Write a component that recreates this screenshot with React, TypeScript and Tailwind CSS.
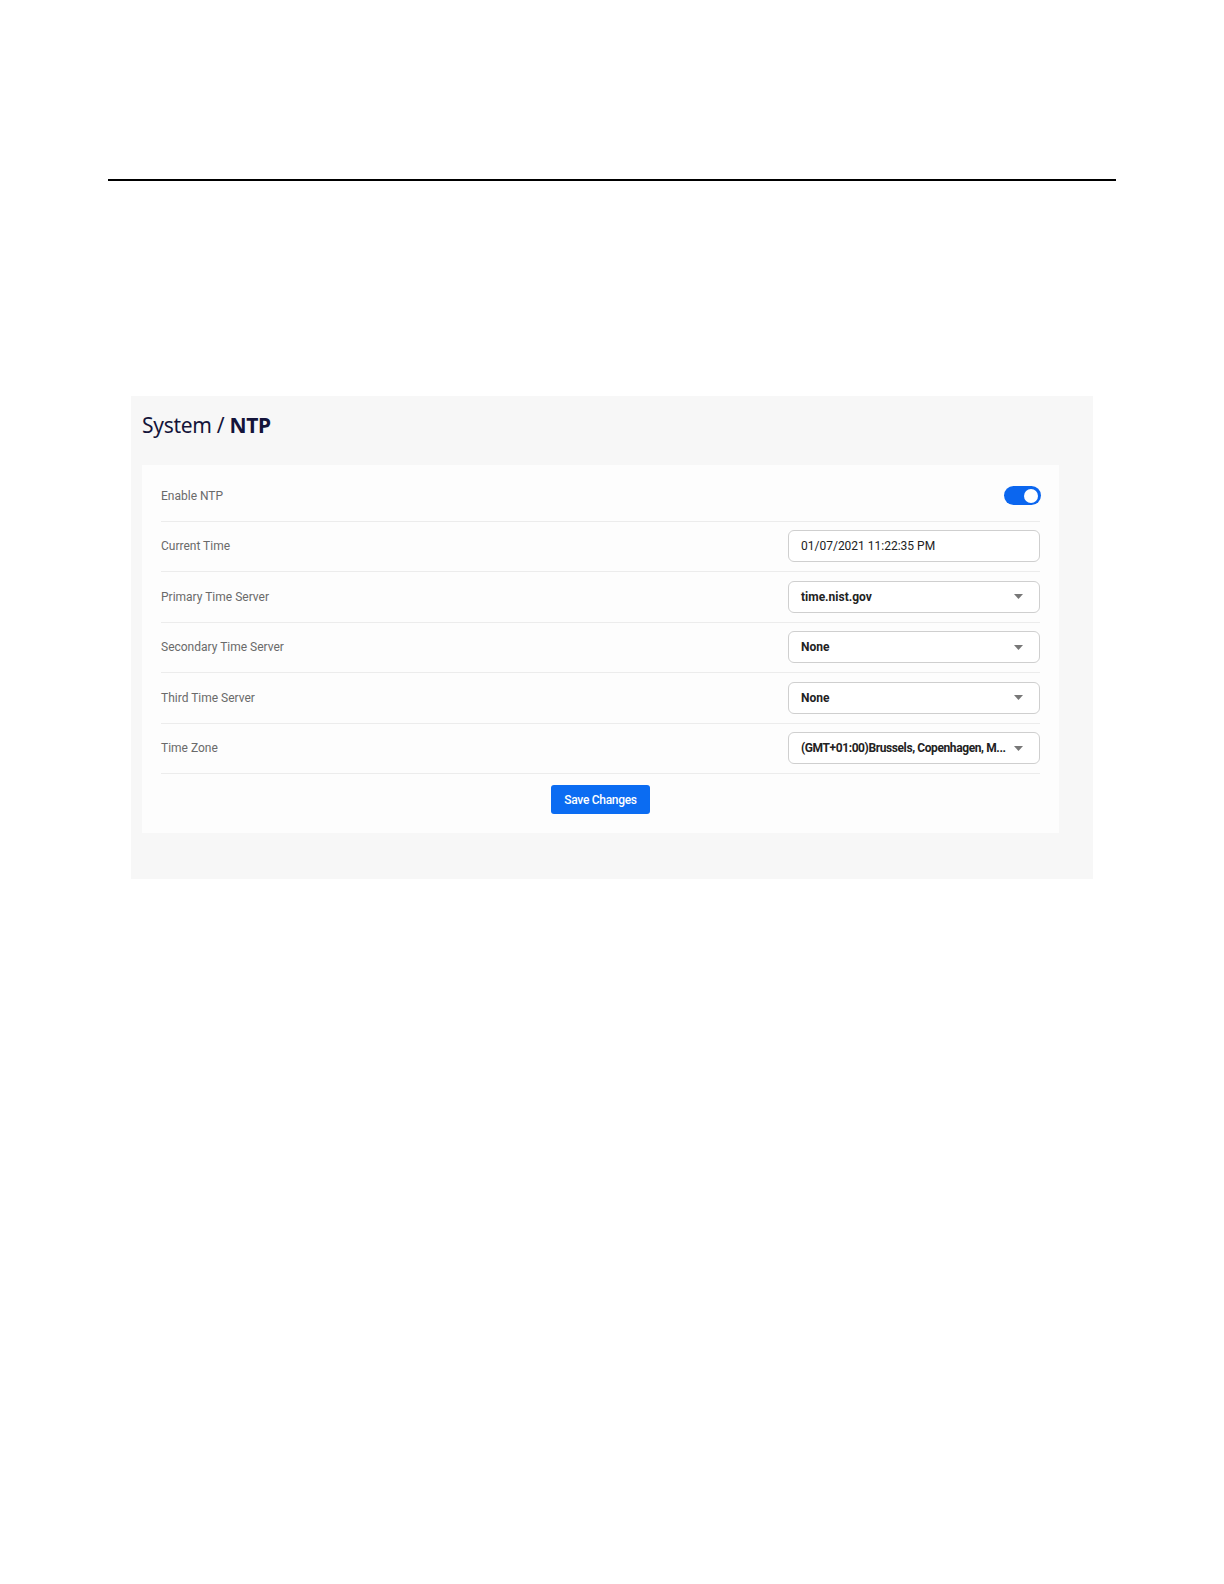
import React from "react";

const Caret = () => (
  <svg width="9" height="5" viewBox="0 0 9 5" className="shrink-0">
    <path d="M0 0 L9 0 L4.5 5 Z" fill="#777" />
  </svg>
);

function SelectBox({ value, tight }: { value: string; tight?: boolean }) {
  return (
    <div className="w-[252px] h-[32px] rounded-[6px] border border-[#cfcfcf] bg-white flex items-center pl-[12px] pr-[16px] gap-[5px]">
      <span
        className={
          tight
            ? "flex-1 whitespace-nowrap text-[12px] font-bold text-[#222] tracking-[-0.4px]"
            : "flex-1 whitespace-nowrap text-[12px] font-bold text-[#222]"
        }
      >
        {value}
      </span>
      <Caret />
    </div>
  );
}

function Row({ label, children }: { label: string; children: React.ReactNode }) {
  return (
    <div className="h-[50.5px] flex items-center justify-between border-b border-[#ececec]">
      <span className="text-[12px] text-[#6a6a6a]">{label}</span>
      {children}
    </div>
  );
}

export default function App() {
  return (
    <div className="bg-white pb-[100px]" style={{ fontFamily: "Roboto, 'Liberation Sans', sans-serif" }}>
      <div className="pt-[179px] pl-[108px]">
        <div className="h-[2px] bg-black w-[1008px]" />
      </div>
      <div className="mt-[215px] ml-[131px] w-[962px] h-[483px] bg-[#f7f7f7] pt-[15px] px-[11px]">
        <h1
          className="text-[21px] leading-[28px] text-[#14143a] tracking-[-0.3px]"
          style={{ fontFamily: "'Noto Sans', 'Open Sans', sans-serif" }}
        >
          System / <span className="font-bold">NTP</span>
        </h1>
        <div className="mt-[26px] w-[917px] h-[368px] bg-[#fdfdfd] pt-[6px] px-[19px]">
          <Row label="Enable NTP">
            <div className="w-[37px] h-[19px] rounded-full bg-[#0b66ef] flex items-center justify-end pr-[3px] mr-[-1px]">
              <div className="w-[14px] h-[14px] rounded-full bg-white" />
            </div>
          </Row>
          <Row label="Current Time">
            <div className="w-[252px] h-[32px] rounded-[6px] border border-[#cfcfcf] bg-white flex items-center pl-[12px]">
              <span className="text-[12px] text-[#222]">01/07/2021 11:22:35 PM</span>
            </div>
          </Row>
          <Row label="Primary Time Server">
            <SelectBox value="time.nist.gov" />
          </Row>
          <Row label="Secondary Time Server">
            <SelectBox value="None" />
          </Row>
          <Row label="Third Time Server">
            <SelectBox value="None" />
          </Row>
          <Row label="Time Zone">
            <SelectBox value="(GMT+01:00)Brussels, Copenhagen, M..." tight />
          </Row>
          <div className="flex justify-center mt-[11px]">
            <button className="w-[99px] h-[29px] rounded-[3px] bg-[#0b6cf2] text-white text-[12px] font-medium tracking-[-0.3px]">
              Save Changes
            </button>
          </div>
        </div>
      </div>
    </div>
  );
}
